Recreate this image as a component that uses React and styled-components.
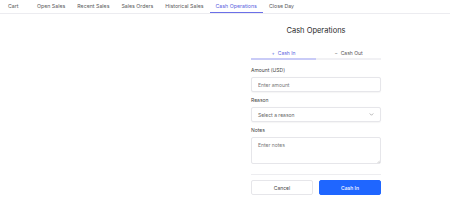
import React from "react";
import styled, { createGlobalStyle } from "styled-components";

const Global = createGlobalStyle`
  html, body { margin: 0; padding: 0; background: #fff; }
  body { font-family: Inter, "Noto Sans", sans-serif; color: #333; }
  * { box-sizing: border-box; }
`;

const TabBar = styled.nav`
  display: flex;
  height: 14px;
  padding-left: 2px;
  border-bottom: 1px solid #ececf0;
`;

const Tab = styled.div`
  padding: 0 6px;
  min-width: ${(p) => (p.$wide ? "29px" : "0")};
  font-size: 5.25px;
  line-height: 12px;
  height: 13px;
  color: ${(p) => (p.$active ? "#5b5fe0" : "#5a5a5a")};
  border-bottom: 1px solid ${(p) => (p.$active ? "#6b6fe8" : "transparent")};
  white-space: nowrap;
`;

const Main = styled.div`
  display: grid;
  grid-template-columns: 182px 1fr;
`;

const Side = styled.div``;

const Panel = styled.section`
  display: flex;
  flex-direction: column;
  align-items: center;
`;

const Title = styled.h1`
  margin: 12px 0 0;
  font-size: 7.5px;
  line-height: 10px;
  font-weight: 400;
  color: #2a2a2a;
`;

const Form = styled.div`
  width: 130px;
  margin-top: 11px;
  display: flex;
  flex-direction: column;
`;

const Segments = styled.div`
  display: grid;
  grid-template-columns: 1fr 1fr;
  margin-bottom: 7px;
`;

const Segment = styled.div`
  height: 13px;
  display: flex;
  align-items: center;
  justify-content: center;
  gap: 3px;
  font-size: 5px;
  color: ${(p) => (p.$active ? "#5b5fe0" : "#555")};
  border-bottom: 2px solid ${(p) => (p.$active ? "#c9cbf7" : "#f1f1f4")};
`;

const Field = styled.div`
  display: flex;
  flex-direction: column;
  margin-bottom: 5px;
`;

const Label = styled.label`
  font-size: 5px;
  line-height: 7px;
  color: #444;
  margin-bottom: 3px;
`;

const Input = styled.input`
  height: 15px;
  border: 1px solid #e6e6ea;
  border-radius: 2px;
  padding: 0 6px;
  font-family: inherit;
  font-size: 5px;
  color: #333;
  outline: none;
  box-shadow: 0 0.5px 1px rgba(0,0,0,0.04);
  &::placeholder { color: #777; }
`;

const SelectBox = styled.div`
  height: 15px;
  border: 1px solid #e6e6ea;
  border-radius: 2px;
  padding: 0 6px;
  display: flex;
  align-items: center;
  justify-content: space-between;
  font-size: 5px;
  color: #666;
  box-shadow: 0 0.5px 1px rgba(0,0,0,0.04);
`;

const AreaWrap = styled.div`
  position: relative;
  display: flex;
`;

const TextArea = styled.textarea`
  flex: 1;
  height: 27px;
  border: 1px solid #e6e6ea;
  border-radius: 2px;
  padding: 4px 6px;
  font-family: inherit;
  font-size: 5px;
  line-height: 7px;
  color: #333;
  outline: none;
  resize: none;
  &::placeholder { color: #777; }
`;

const Grip = styled.svg`
  position: absolute;
  right: 1.5px;
  bottom: 1.5px;
  pointer-events: none;
`;

const Divider = styled.hr`
  border: 0;
  border-top: 1px solid #ededf0;
  margin: 5px 0 5px;
`;

const Buttons = styled.div`
  display: grid;
  grid-template-columns: 1fr 1fr;
  gap: 6px;
`;

const Button = styled.button`
  height: 15px;
  border-radius: 2px;
  font-family: inherit;
  font-size: 5px;
  padding: 0;
  border: 1px solid ${(p) => (p.$primary ? "#1f66ff" : "#e6e6ea")};
  background: ${(p) => (p.$primary ? "#1f66ff" : "#fff")};
  color: ${(p) => (p.$primary ? "#fff" : "#444")};
  font-weight: ${(p) => (p.$primary ? 500 : 400)};
`;

const tabs = [
  "Cart",
  "Open Sales",
  "Recent Sales",
  "Sales Orders",
  "Historical Sales",
  "Cash Operations",
  "Close Day",
];

export default function App() {
  return (
    <>
      <Global />
      <TabBar>
        {tabs.map((t) => (
          <Tab key={t} $active={t === "Cash Operations"} $wide={t === "Cart"}>
            {t}
          </Tab>
        ))}
      </TabBar>
      <Main>
        <Side />
        <Panel>
          <Title>Cash Operations</Title>
          <Form>
            <Segments>
              <Segment $active>
                <span>+</span>
                <span>Cash In</span>
              </Segment>
              <Segment>
                <span>−</span>
                <span>Cash Out</span>
              </Segment>
            </Segments>
            <Field>
              <Label>Amount (USD)</Label>
              <Input placeholder="Enter amount" />
            </Field>
            <Field>
              <Label>Reason</Label>
              <SelectBox>
                <span>Select a reason</span>
                <svg width="5" height="5" viewBox="0 0 10 10" fill="none">
                  <path d="M2 3.5 L5 6.5 L8 3.5" stroke="#888" strokeWidth="1.2" strokeLinecap="round" strokeLinejoin="round" />
                </svg>
              </SelectBox>
            </Field>
            <Field>
              <Label>Notes</Label>
              <AreaWrap>
                <TextArea placeholder="Enter notes" />
                <Grip width="3" height="3" viewBox="0 0 6 6">
                  <path d="M6 1 L1 6 M6 3.5 L3.5 6" stroke="#999" strokeWidth="0.8" />
                </Grip>
              </AreaWrap>
            </Field>
            <Divider />
            <Buttons>
              <Button>Cancel</Button>
              <Button $primary>Cash In</Button>
            </Buttons>
          </Form>
        </Panel>
      </Main>
    </>
  );
}
